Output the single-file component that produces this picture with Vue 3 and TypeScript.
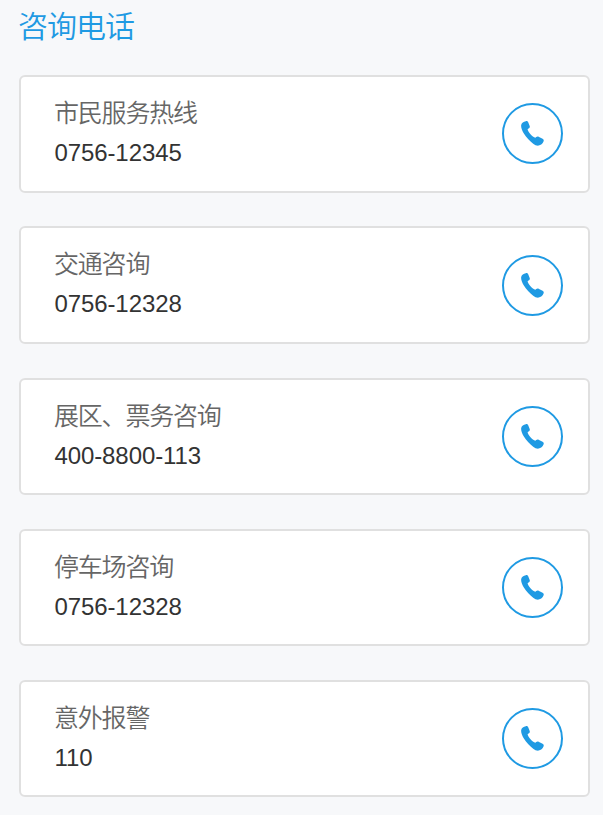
<script setup lang="ts">
interface Contact {
  name: string
  phone: string
}

const contacts: Contact[] = [
  { name: '市民服务热线', phone: '0756-12345' },
  { name: '交通咨询', phone: '0756-12328' },
  { name: '展区、票务咨询', phone: '400-8800-113' },
  { name: '停车场咨询', phone: '0756-12328' },
  { name: '意外报警', phone: '110' },
]
</script>

<template>
  <main class="page">
    <h1 class="title">咨询电话</h1>
    <ul class="list">
      <li v-for="contact in contacts" :key="contact.name" class="card">
        <div class="info">
          <span class="name">{{ contact.name }}</span>
          <span class="phone">{{ contact.phone }}</span>
        </div>
        <a class="call" :href="`tel:${contact.phone}`" :aria-label="contact.name">
          <svg class="icon" viewBox="0 0 23 25" aria-hidden="true">
            <path d="M.2 4C.6 1.8 2.6.7 4.8.2C6.1-.1 6.9.5 7.3 1.5L8.7 5C9.1 6.2 8.6 7.1 7.5 7.6L6.6 8.2C7.2 11.4 11.2 15.8 14.4 16.8L15.2 16.1C16 15.4 17 15.4 18 15.9L21.6 17.8C22.8 18.4 23 19.4 22.5 20.6C21.7 22.7 19.8 24.3 17.6 24.6C15.8 24.8 13.8 24 12.2 22.7C8.8 20.2 5.2 16.2 2.7 12.2C1.1 9.5-.2 6.5.2 4Z" />
          </svg>
        </a>
      </li>
    </ul>
  </main>
</template>

<style>
body {
  background: #f7f8fa;
}
</style>

<style scoped>
.page {
  box-sizing: border-box;
  height: 815px;
  padding: 7px 13px 0 19px;
  overflow: hidden;
  background: #f7f8fa;
  font-family: "Liberation Sans", "Noto Sans CJK SC", sans-serif;
}
.title {
  margin: 0 0 28.25px -1px;
  color: #1f9ae3;
  font-size: 30px;
  font-weight: 350;
  line-height: 40px;
  letter-spacing: -1px;
}
.list {
  display: grid;
  gap: 33.9px;
  margin: 0;
  padding: 0;
  list-style: none;
}
.card {
  box-sizing: border-box;
  display: flex;
  align-items: center;
  justify-content: space-between;
  height: 117.3px;
  padding: 0 25px 0 33px;
  border: 2px solid #e0e0e0;
  border-radius: 6px;
  background: #fff;
}
.info {
  display: flex;
  flex-direction: column;
  margin-top: -1.2px;
  line-height: 40px;
}
.name {
  color: #666;
  font-size: 25px;
  font-weight: 350;
  letter-spacing: -1.2px;
}
.phone {
  padding-left: 0.4px;
  color: #333;
  font-size: 24px;
  letter-spacing: -0.08px;
}
.call {
  box-sizing: border-box;
  display: flex;
  align-items: center;
  justify-content: center;
  width: 61px;
  height: 61px;
  border: 2px solid #1f9ae3;
  border-radius: 50%;
}
.icon {
  width: 23px;
  height: 25px;
  fill: #1f9ae3;
}
</style>
